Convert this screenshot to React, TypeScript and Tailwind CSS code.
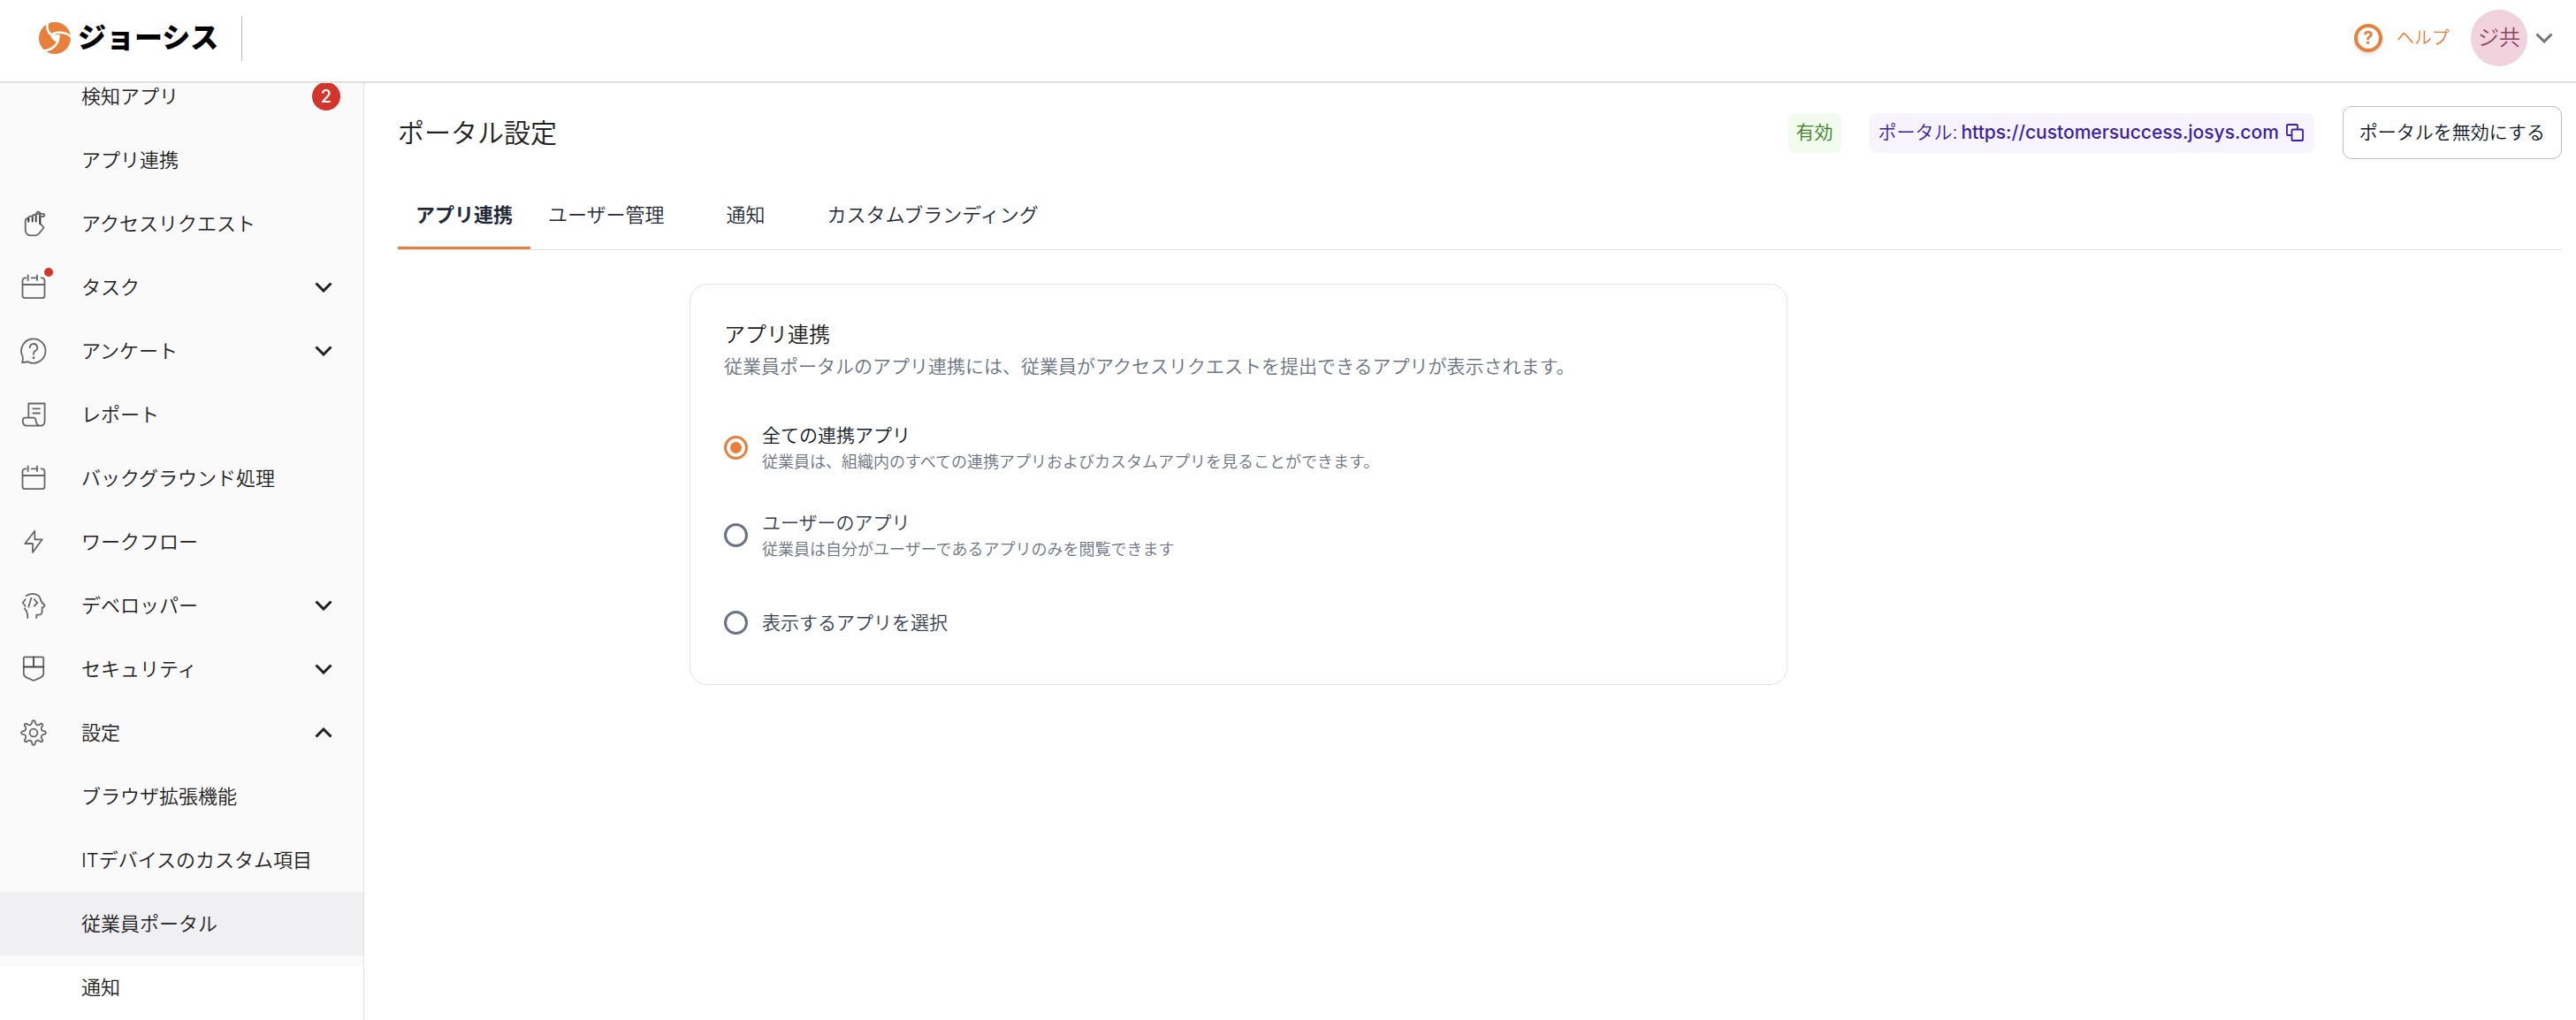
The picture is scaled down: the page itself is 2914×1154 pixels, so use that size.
import React, { useState } from "react";

type IconProps = { children: React.ReactNode };

const LineIcon: React.FC<IconProps> = ({ children }) => (
  <svg
    viewBox="0 0 28 28"
    className="size-7 overflow-visible"
    fill="none"
    stroke="#666"
    strokeWidth="1.8"
    strokeLinecap="round"
    strokeLinejoin="round"
    aria-hidden="true"
  >
    {children}
  </svg>
);

const HandIcon = () => (
  <LineIcon>
    <path d="M8.3 11.5V8c-2 0-3.6.8-3.6 3v9.500c0 4 2.300 6.800 5.800 6.800h5.500c2 0 3.200-.9 4.300-2.300l4.700-5.700c.5-.7.4-1.300-.2-1.900l-3.500-3.400V2.500c0-1.100-.8-1.900-1.900-1.900-1.100 0-2 .8-2 1.900" />
    <path d="M8.300 7.500v4M12.700 5.500v6M16.700 5v6.500M21.300 5v9" stroke="#333" />
    <path d="M8.300 7.500c0-2.500 4.400-2.500 4.400-.5 0-5 9-4.200 12.300-4 1.700.2 1.700 3 0 3h-3.500M12.700 5.500c.5-2 3.500-2 4-.5" />
  </LineIcon>
);

const CalendarIcon = () => (
  <LineIcon>
    <path d="M5.500 3.300H5c-2 0-3.500 1.200-3.500 3.200v17c0 1.600 1 2.700 2.700 2.700h19.600c1.700 0 2.700-1.100 2.700-2.700v-17c0-2-1.500-3.200-3.500-3.200h-.5M11.700 3.300H18M1.500 11h25M7.700.3v5.700M18 .3v5.700" />
  </LineIcon>
);

const SurveyIcon = () => (
  <LineIcon>
    <path d="M1.600 20.300A13.700 13.700 0 1 1 7.300 26.100c-1.800.9-3.900 1-6.300.9.900-2 1.200-4.300.6-6.700Z" />
    <path d="M9.800 10.200a4.200 4.200 0 1 1 6.200 3.700c-1.500.8-2 1.600-2 3.300v.7" />
    <circle cx="14" cy="21.700" r=".6" />
  </LineIcon>
);

const ReportIcon = () => (
  <LineIcon>
    <path d="M8.300 17.700V1.500h18.300v19.700c0 3.300-2.100 5.400-5 5.400s-4.500-2.200-4.900-5.200c-.3-2-.9-3.700-2.200-3.700H4.600c-1.900 0-2.900 1.200-2.900 3.200 0 3.600 1.700 5.700 4.700 5.700h15.200M13.300 7.300H21M13.300 12.500H21" />
  </LineIcon>
);

const BoltIcon = () => (
  <LineIcon>
    <path d="M15.300 1.700 4.300 16H13v10l10.700-14.700h-8.400Z" />
  </LineIcon>
);

const DeveloperIcon = () => (
  <LineIcon>
    <path d="M5.700 3C12 -1 20.200.7 21.800 7c.5 2.700 1.700 4.500 4.600 6.500.5.900-.2 2.100-2.700 2.800 0 5.300.2 7.300-2.500 8l-3.900.3V28M3.700 17.300c2.500 2.300 3.700 4.400 3.600 10.700" />
    <path d="M4.700 7.300 1.700 11l3 3.700M11.300 5.700l-3 10M14.700 7l3.600 3.800-3.600 3.900" />
  </LineIcon>
);

const ShieldIcon = () => (
  <LineIcon>
    <path d="M4 .3h20c.8 0 1.200.4 1.200 1.200v17c0 2.700-1.200 4.200-3.400 5.200L14 27l-7.800-3.300c-2.200-1-3.400-2.500-3.400-5.200v-17C2.800.7 3.200.3 4 .3Z" />
    <path d="M2.800 11.500h22.400M14 .3v11.200" stroke="#444" />
  </LineIcon>
);

const point = (deg: number, r: number) => {
  const a = (deg * Math.PI) / 180;
  return `${(14 + r * Math.sin(a)).toFixed(2)} ${(14 - r * Math.cos(a)).toFixed(2)}`;
};

const gearPath =
  [0, 45, 90, 135, 180, 225, 270, 315]
    .map(
      (d, i) =>
        `${i ? "L" : "M"}${point(d - 9, 11.4)}L${point(d - 7, 13)}Q${point(d, 14.8)} ${point(d + 7, 13)}L${point(d + 9, 11.4)}Q${point(d + 22.5, 8.2)} ${point(d + 36, 11.4)}`
    )
    .join("") + "Z";

const GearIcon = () => (
  <LineIcon>
    <path d={gearPath} />
    <circle cx="14" cy="14" r="4.400" />
  </LineIcon>
);

const Chevron: React.FC<{ up?: boolean; color?: string }> = ({ up, color = "#212121" }) => (
  <svg viewBox="0 0 20 12" className="w-5 h-3" fill="none" stroke={color} strokeWidth="3" aria-hidden="true">
    <path d={up ? "M1.500 10.500 10 2l8.500 8.500" : "M1.500 1.500 10 10l8.500-8.500"} />
  </svg>
);

const LogoMark = () => (
  <svg viewBox="0 0 36 36" className="size-9" aria-hidden="true">
    <circle cx="18" cy="18" r="18" fill="#e87f3a" />
    <g fill="none" stroke="#fff" strokeWidth="2.600">
      <path d="M10.200 0C8 7.500 10.500 14.500 18 15.200" />
      <path d="M37 17.500C31 10.500 18 10 13.500 15.500" />
      <path d="M5 32.500C14 32 23.500 26 22.200 14" />
    </g>
    <path d="M13 13.500c3 1.500 7 .5 10.500.5.500 4-1 7-4 8.500-3-2-6-4-6.500-9Z" fill="#fff" />
  </svg>
);

const menu: {
  label: string;
  icon?: React.FC;
  count?: number;
  dot?: boolean;
  arrow?: "up" | "down";
  active?: boolean;
}[] = [
  { label: "検知アプリ", count: 2 },
  { label: "アプリ連携" },
  { label: "アクセスリクエスト", icon: HandIcon },
  { label: "タスク", icon: CalendarIcon, dot: true, arrow: "down" },
  { label: "アンケート", icon: SurveyIcon, arrow: "down" },
  { label: "レポート", icon: ReportIcon },
  { label: "バックグラウンド処理", icon: CalendarIcon },
  { label: "ワークフロー", icon: BoltIcon },
  { label: "デベロッパー", icon: DeveloperIcon, arrow: "down" },
  { label: "セキュリティ", icon: ShieldIcon, arrow: "down" },
  { label: "設定", icon: GearIcon, arrow: "up" },
  { label: "ブラウザ拡張機能" },
  { label: "ITデバイスのカスタム項目" },
  { label: "従業員ポータル", active: true },
  { label: "通知" },
];

const tabs = ["アプリ連携", "ユーザー管理", "通知", "カスタムブランディング"];

const options = [
  {
    id: "all",
    label: "全ての連携アプリ",
    note: "従業員は、組織内のすべての連携アプリおよびカスタムアプリを見ることができます。",
  },
  {
    id: "user",
    label: "ユーザーのアプリ",
    note: "従業員は自分がユーザーであるアプリのみを閲覧できます",
  },
  { id: "select", label: "表示するアプリを選択" },
];

const Header = () => (
  <header className="relative z-10 flex h-[94px] shrink-0 items-center justify-between border-b-2 border-[#e0e0e0] bg-white pr-[26px] pb-[6px] pl-11">
    <div className="flex items-center">
      <a href="#" className="flex items-center gap-2">
        <LogoMark />
        <span className="text-[32px] leading-9 font-black text-black">ジョーシス</span>
      </a>
      <div className="ml-[26px] h-[51px] w-px bg-[#bdbdbd]" />
    </div>
    <div className="flex items-center">
      <a href="#" className="flex items-center gap-4 text-xl text-[#e87f3a]">
        <span className="flex size-8 items-center justify-center rounded-full border-4 border-[#e87f3a] bg-white text-xl leading-none font-bold shadow-md">
          ?
        </span>
        ヘルプ
      </a>
      <button className="ml-6 flex items-center gap-[9px]">
        <span className="flex size-16 items-center justify-center rounded-full bg-[#f0d3dd] text-2xl text-[#8a4762]">
          ジ共
        </span>
        <Chevron color="#757575" />
      </button>
    </div>
  </header>
);

const Sidebar = () => (
  <aside className="w-[412px] shrink-0 overflow-hidden border-r border-[#e0e0e0]">
    <nav className="-mt-[21px] h-[calc(100vh-134px)] bg-[#fafafa]">
      {menu.map(({ label, icon: Icon, count, dot, arrow, active }, i) => (
        <a
          key={i}
          href="#"
          className={`flex h-[72px] items-center pr-[35px] pl-6 text-[22px] text-[#212121] ${active ? "bg-[#f0f0f3]" : ""}`}
        >
          <span className="relative mr-10 size-7">
            {Icon && <Icon />}
            {dot && <span className="absolute -top-2 -right-2 size-[10px] rounded-full bg-[#d3342b]" />}
          </span>
          <span className="flex-1 whitespace-nowrap">{label}</span>
          {count && (
            <span className="-mr-[9px] flex size-8 items-center justify-center rounded-full bg-[#d3342b] text-xl font-medium text-white">
              {count}
            </span>
          )}
          {arrow && <Chevron up={arrow === "up"} />}
        </a>
      ))}
    </nav>
  </aside>
);

export default function App() {
  const [tab, setTab] = useState(tabs[0]);
  const [option, setOption] = useState("all");

  return (
    <div
      lang="ja"
      className="flex h-screen flex-col overflow-hidden bg-white font-['Inter','Noto_Sans_CJK_JP',sans-serif] font-[350] text-[#212121]"
    >
      <Header />
      <div className="flex min-h-0 flex-1">
        <Sidebar />
        <main className="min-w-0 flex-1 pt-6 pr-4 pl-[38px]">
          <div className="flex h-[64px] items-center">
            <h1 className="flex-1 text-[30px]">ポータル設定</h1>
            <span className="mr-8 flex h-[45px] items-center rounded-lg bg-[#f1fbee] px-[9px] text-[21px] text-[#3d7f22]">
              有効
            </span>
            <div className="mr-8 flex h-[45px] items-center rounded-lg bg-[#f7f4fe] pr-3 pl-[10px] text-[21px] text-[#3a1fa8]">
              <span className="mr-1">ポータル:</span>
              <a href="https://customersuccess.josys.com" className="font-medium">
                https://customersuccess.josys.com
              </a>
              <button aria-label="コピー" className="ml-2">
                <svg viewBox="0 0 20 20" className="size-5" fill="none" stroke="currentColor" strokeWidth="1.800" strokeLinejoin="round">
                  <rect x="6.500" y="6.500" width="12.500" height="12.500" rx="1" />
                  <path d="M6.500 13H2c-.6 0-1-.4-1-1V2c0-.6.4-1 1-1h10c.6 0 1 .4 1 1v4.500" />
                </svg>
              </button>
            </div>
            <button className="h-[60px] rounded-[10px] border border-[#bdbdbd] px-[18px] text-[21px] text-[#111827]">
              ポータルを無効にする
            </button>
          </div>

          <div role="tablist" className="mt-[21px] flex h-[80px] border-b border-[#e0e0e0]">
            {tabs.map((name) => (
              <button
                key={name}
                role="tab"
                aria-selected={tab === name}
                onClick={() => setTab(name)}
                className={`min-w-36 border-b-3 px-5 pt-1 text-[22px] text-[#1f2937] ${
                  tab === name ? "border-[#e87f3a] font-bold" : "border-transparent"
                }`}
              >
                {name}
              </button>
            ))}
          </div>

          <section className="mt-[38px] ml-[330px] max-w-[1242px] rounded-[20px] border border-[#e3e3e6] px-[38px] pt-[39px] pb-5">
            <h2 className="text-2xl leading-9">アプリ連携</h2>
            <p className="text-[21px] leading-9 text-[#6b7280]">
              従業員ポータルのアプリ連携には、従業員がアクセスリクエストを提出できるアプリが表示されます。
            </p>
            <div className="mt-6">
              {options.map(({ id, label, note }) => (
                <label key={id} htmlFor={id} className="flex h-[99px] items-center gap-4">
                  <input
                    id={id}
                    type="radio"
                    name="visibility"
                    checked={option === id}
                    onChange={() => setOption(id)}
                    className="size-[27px] shrink-0 appearance-none rounded-full border-3 border-[#6b7280] bg-clip-content p-1 checked:border-[#e87f3a] checked:bg-[#e87f3a]"
                  />
                  <span className="flex flex-col">
                    <span className={`text-[21px] leading-8 ${option === id ? "text-[#111827]" : "text-[#374151]"}`}>
                      {label}
                    </span>
                    {note && <span className="text-lg leading-7 text-[#6b7280]">{note}</span>}
                  </span>
                </label>
              ))}
            </div>
          </section>
        </main>
      </div>
    </div>
  );
}
